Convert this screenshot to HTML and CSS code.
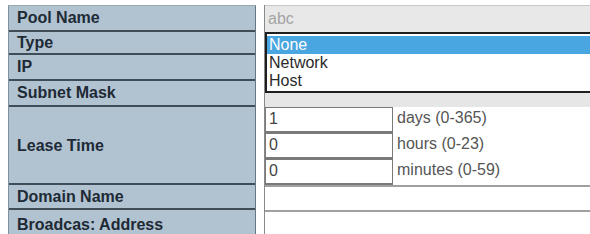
FILE: index.html
```html
<!DOCTYPE html>
<html lang="en">
<head>
  <title>DHCP pool</title>
  <link rel="stylesheet" href="styles.css">
</head>
<body>
  <div class="form">
    <div class="labels">
      <div class="label pool">Pool Name</div>
      <div class="label type">Type</div>
      <div class="label ip">IP</div>
      <div class="label subnet">Subnet Mask</div>
      <div class="label lease">Lease Time</div>
      <div class="label domain">Domain Name</div>
      <div class="label bcast">Broadcas: Address</div>
    </div>
    <div class="values">
      <div class="val-pool">abc</div>
      <div class="listbox">
        <div class="opt selected">None</div>
        <div class="opt">Network</div>
        <div class="opt">Host</div>
      </div>
      <div class="val-strip"></div>
      <div class="val-lease">
        <div class="lease-row">
          <div class="box">1</div>
          <div class="unit">days (0-365)</div>
        </div>
        <div class="lease-row">
          <div class="box">0</div>
          <div class="unit">hours (0-23)</div>
        </div>
        <div class="lease-row">
          <div class="box">0</div>
          <div class="unit">minutes (0-59)</div>
        </div>
      </div>
      <div class="val-domain"></div>
      <div class="val-bcast"></div>
    </div>
  </div>
</body>
</html>
```

FILE: styles.css
```css
*{
  margin: 0;
  padding: 0;
  box-sizing: border-box;
}
body{
  width: 590px;
  height: 234px;
  overflow: hidden;
  background: #fff;
  font-family: "Liberation Sans", Arial, sans-serif;
  font-size: 16px;
}
.form{
  display: flex;
  width: 600px;
  padding: 5px 0 0 8px;
}
.labels{
  width: 248px;
  background: #b1c3d1;
  border-left: 1px solid #7f909c;
  border-right: 1px solid #667682;
  border-top: 1px solid #9aa8b2;
}
.label{
  display: flex;
  align-items: center;
  padding-left: 8px;
  font-weight: bold;
  color: #1e2a35;
  border-bottom: 2px solid #3e4d58;
}
.pool{ height: 26px; }
.type{ height: 23px; }
.ip{ height: 26px; }
.subnet{ height: 26px; }
.lease{ height: 78px; padding-top: 2px; }
.domain{ height: 25px; }
.bcast{ height: 30px; border-bottom: none; }

.values{
  flex: 1;
  margin-left: 8px;
  border-left: 1px solid #8a8a8a;
}
.val-pool{
  height: 27px;
  background: #e8e8e8;
  border-top: 1px solid #c8c8c8;
  color: #a4a4a4;
  padding: 4px 0 0 3px;
}
.listbox{
  height: 61px;
  border: 2px solid #1e1e1e;
  background: #fff;
  padding-top: 2px;
}
.opt{
  height: 18px;
  line-height: 18px;
  padding-left: 2px;
  color: #2a2a2a;
}
.opt.selected{
  background: #4aa6e0;
  color: #fff;
}
.val-strip{
  height: 14px;
  background: #e6e6e6;
}
.val-lease{
  height: 78px;
  border-right: 1px solid #e2e2e2;
}
.lease-row{
  display: flex;
  height: 26px;
}
.box{
  width: 128px;
  border: 1px solid #7a7a7a;
  border-bottom-width: 2px;
  color: #444;
  padding: 2px 0 0 3px;
}
.unit{
  padding: 2px 0 0 4px;
  color: #555;
}
.val-domain{
  height: 25px;
  border-top: 2px solid #a0a0a0;
}
.val-bcast{
  height: 30px;
  border-top: 2px solid #a0a0a0;
}
```
